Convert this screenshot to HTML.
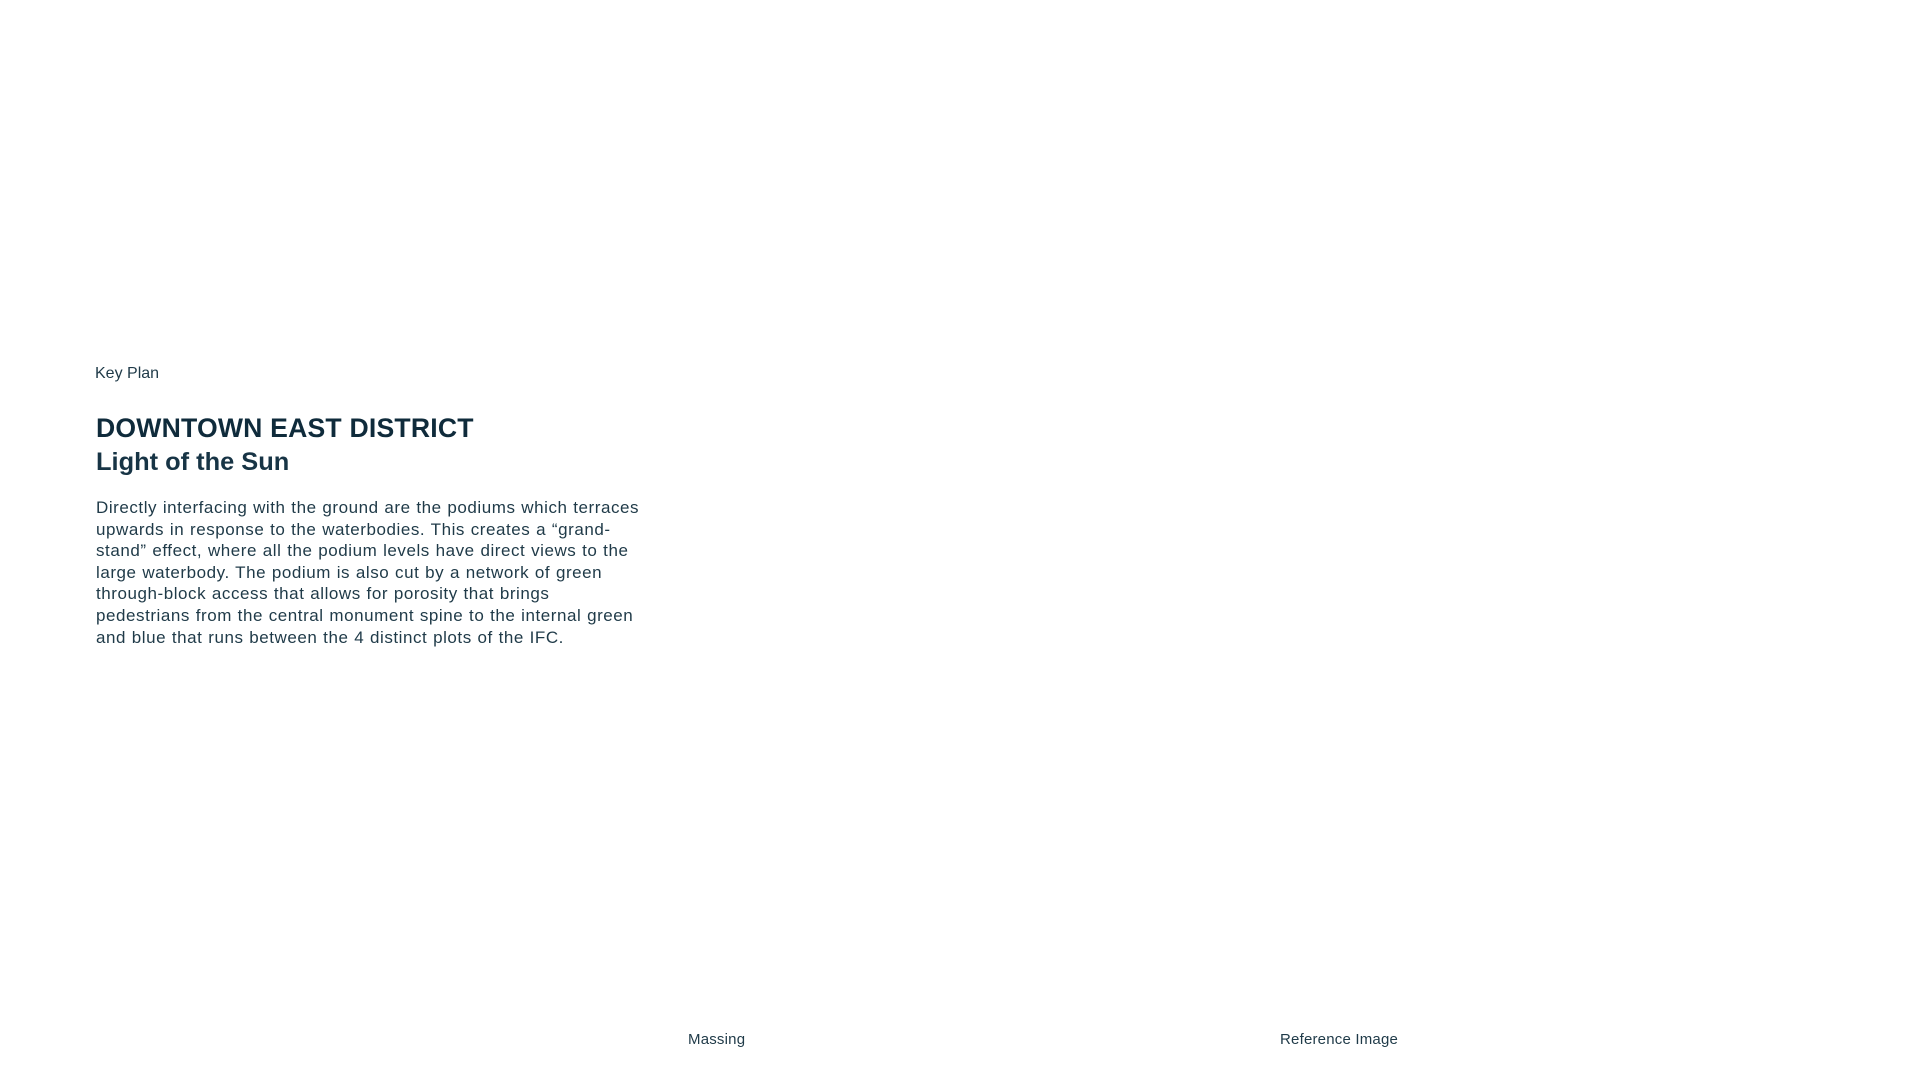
<!DOCTYPE html>
<html><head><style>
html,body{margin:0;padding:0;background:#fff;width:1920px;height:1080px;overflow:hidden}
body{font-family:"Liberation Sans",sans-serif;color:#0f2b3b;position:relative}
.a{position:absolute;white-space:nowrap}
</style></head><body>
<div class="a" style="left:95px;top:365px;font-size:16px;color:#1f3a48">Key Plan</div>
<div class="a" style="left:96px;top:413px;font-size:26.6px;font-weight:bold;letter-spacing:0.2px">DOWNTOWN EAST DISTRICT</div>
<div class="a" style="left:96px;top:448px;font-size:25.4px;font-weight:bold;color:#173445">Light of the Sun</div>
<div class="a" style="left:96px;top:497px;font-size:17px;line-height:21.6px;color:#1f3a48;letter-spacing:0.55px;word-spacing:0.5px">Directly interfacing with the ground are the podiums which terraces<br>upwards in response to the waterbodies. This creates a “grand-<br>stand” effect, where all the podium levels have direct views to the<br>large waterbody. The podium is also cut by a network of green<br>through-block access that allows for porosity that brings<br>pedestrians from the central monument spine to the internal green<br>and blue that runs between the 4 distinct plots of the IFC.</div>
<div class="a" style="left:688px;top:1031px;font-size:15px;color:#1f3a48;letter-spacing:0.2px">Massing</div>
<div class="a" style="left:1280px;top:1031px;font-size:15px;color:#1f3a48;letter-spacing:0.2px">Reference Image</div>
</body></html>
